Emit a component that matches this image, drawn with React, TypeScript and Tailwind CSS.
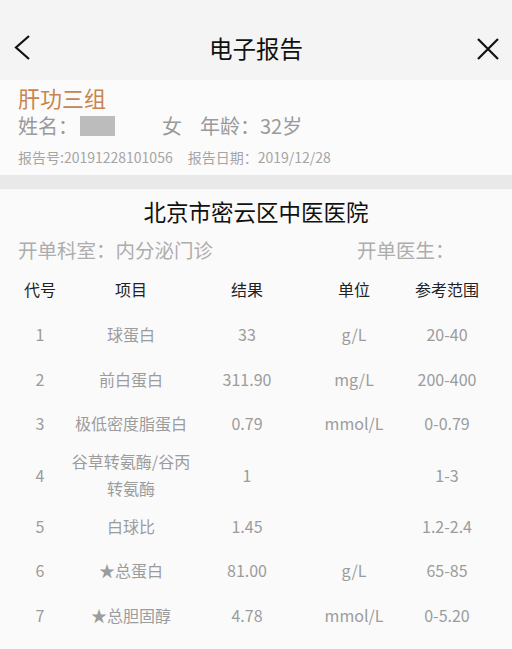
import React from "react";

type Row = {
  code: string;
  name: string;
  result: string;
  unit: string;
  range: string;
};

const rows: Row[] = [
  { code: "1", name: "球蛋白", result: "33", unit: "g/L", range: "20-40" },
  { code: "2", name: "前白蛋白", result: "311.90", unit: "mg/L", range: "200-400" },
  { code: "3", name: "极低密度脂蛋白", result: "0.79", unit: "mmol/L", range: "0-0.79" },
  { code: "4", name: "谷草转氨酶/谷丙转氨酶", result: "1", unit: "", range: "1-3" },
  { code: "5", name: "白球比", result: "1.45", unit: "", range: "1.2-2.4" },
  { code: "6", name: "★总蛋白", result: "81.00", unit: "g/L", range: "65-85" },
  { code: "7", name: "★总胆固醇", result: "4.78", unit: "mmol/L", range: "0-5.20" },
];

const grid = "grid grid-cols-[52px_130px_102px_112px_74px] pl-[14px]";

function App() {
  return (
    <div
      className="w-[512px] h-[649px] overflow-hidden bg-[#fafafa]"
      style={{ fontFamily: '"Noto Sans CJK SC", "Noto Sans", sans-serif' }}
    >
      {/* top bar */}
      <div className="h-[80px] bg-[#f4f4f4] flex items-end">
        <div className="relative w-full h-[44px] mb-[9px] flex items-center justify-center">
          <svg className="absolute left-[12px] top-[7px]" width="24" height="30" viewBox="0 0 24 30">
            <path d="M17 2 L4 13.5 L17 25" fill="none" stroke="#111" strokeWidth="2.2" />
          </svg>
          <span className="text-[23.5px] leading-none text-[#111]">电子报告</span>
          <svg className="absolute right-[12px] top-[11px]" width="24" height="24" viewBox="0 0 24 24">
            <path d="M2 1 L22 21 M22 1 L2 21" fill="none" stroke="#111" strokeWidth="2.2" />
          </svg>
        </div>
      </div>

      {/* patient info */}
      <div className="bg-[#fbfbfb] pt-[4px] pb-[3px] pl-[18px]">
        <div className="h-[26px] flex items-center text-[22px] text-[#c8854f]">肝功三组</div>
        <div className="h-[32px] flex items-center text-[20px] text-[#9a9a9a]">
          <span>姓名：</span>
          <span className="ml-[2px] w-[35px] h-[20px] bg-[#bcbcbc]" />
          <span className="ml-[47px]">女</span>
          <span className="ml-[18px]">年龄：32岁</span>
        </div>
        <div className="h-[30px] flex items-center text-[14px] text-[#a5a5a5] gap-[15px]">
          <span>报告号:20191228101056</span>
          <span>报告日期：2019/12/28</span>
        </div>
      </div>

      <div className="h-[14px] bg-[#e9e9e9]" />

      {/* report */}
      <div className="bg-[#fafafa]">
        <div className="h-[46px] flex items-center justify-center text-[22.5px] text-[#111]">
          北京市密云区中医医院
        </div>
        <div className="h-[30px] flex items-center pl-[18px] text-[19.5px] text-[#adadad]">
          <span className="w-[339px]">开单科室：内分泌门诊</span>
          <span>开单医生：</span>
        </div>
        <div className={`${grid} h-[47.5px] items-center text-[16px] text-[#222] text-center`}>
          <span>代号</span>
          <span>项目</span>
          <span>结果</span>
          <span>单位</span>
          <span>参考范围</span>
        </div>
        {rows.map((r) => (
          <div
            key={r.code}
            className={`${grid} min-h-[44.5px] py-[2px] items-center text-[16px] leading-[27px] text-[#9c9c9c] text-center`}
          >
            <span>{r.code}</span>
            <span>{r.name}</span>
            <span>{r.result}</span>
            <span>{r.unit}</span>
            <span>{r.range}</span>
          </div>
        ))}
      </div>
    </div>
  );
}

export default App;
